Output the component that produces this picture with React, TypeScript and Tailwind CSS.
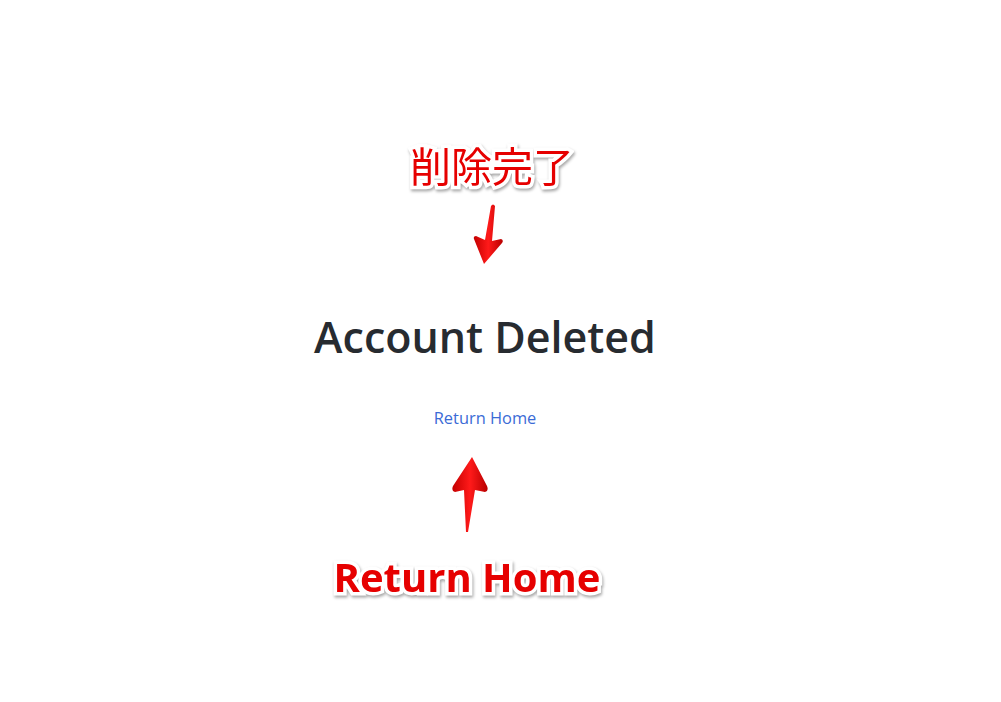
import React from "react";

const annot =
  "text-[#e60000] [-webkit-text-stroke:7px_#ffffff] [paint-order:stroke_fill] [filter:drop-shadow(1px_2px_1.5px_rgba(0,0,0,0.35))]";

function DownArrow() {
  return (
    <svg width="40" height="64" viewBox="0 0 40 64" className="translate-x-[5px]">
      <defs>
        <linearGradient id="ga" x1="0" x2="1" y1="0" y2="0">
          <stop offset="0" stopColor="#c40000" />
          <stop offset="0.5" stopColor="#ff1a1a" />
          <stop offset="1" stopColor="#b80000" />
        </linearGradient>
      </defs>
      <path
        d="M21 3 Q23 0 25 3 L22 38 L31 36 Q34 37 32 40 L14 61 L4 36 Q3 33 6 33 L15 37 Z"
        fill="url(#ga)"
      />
    </svg>
  );
}

function UpArrow() {
  return (
    <svg width="40" height="82" viewBox="0 0 40 82" className="-translate-x-[15px]">
      <defs>
        <linearGradient id="gb" x1="0" x2="1" y1="0" y2="0">
          <stop offset="0" stopColor="#c40000" />
          <stop offset="0.5" stopColor="#ff1a1a" />
          <stop offset="1" stopColor="#b80000" />
        </linearGradient>
      </defs>
      <path
        d="M22 3 L37 32 Q39 37 35 38 L25 36 L18 78 L16 78 L14 36 L5 38 Q1 37 3 32 Z"
        fill="url(#gb)"
      />
    </svg>
  );
}

export default function App() {
  return (
    <div className="h-[702px] w-full bg-white overflow-hidden">
      <div className="w-[970px] flex flex-col items-center">
        <div
          className={`mt-[140px] text-[41px] leading-[48px] translate-x-[7px] ${annot}`}
          style={{ fontFamily: '"Noto Sans CJK JP", "Noto Sans", sans-serif' }}
        >
          削除完了
        </div>
        <div className="mt-[15px]">
          <DownArrow />
        </div>
        <h1
          className="mt-[42px] text-[43px] leading-[56px] font-semibold text-[#272b30]"
          style={{ fontFamily: '"Open Sans", "Noto Sans", sans-serif' }}
        >
          Account Deleted
        </h1>
        <a
          href="#"
          className="mt-[41px] text-[16.4px] leading-[24px] text-[#3b6bd6]"
          style={{ fontFamily: '"Open Sans", "Noto Sans", sans-serif' }}
        >
          Return Home
        </a>
        <div className="mt-[24px]">
          <UpArrow />
        </div>
        <div
          className={`mt-[17px] text-[40px] leading-[48px] font-bold -translate-x-[18px] ${annot}`}
          style={{ fontFamily: '"Open Sans", "Noto Sans", sans-serif' }}
        >
          Return Home
        </div>
      </div>
    </div>
  );
}
